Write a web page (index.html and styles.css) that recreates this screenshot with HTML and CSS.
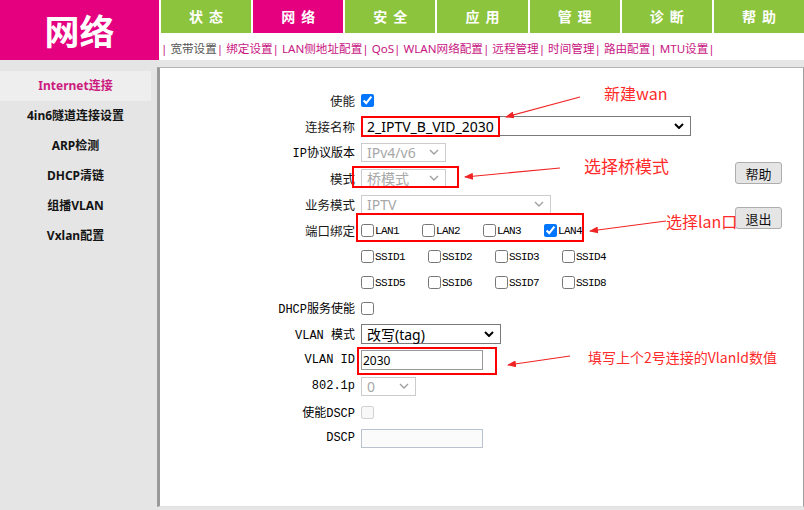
FILE: index.html
```html
<!DOCTYPE html>
<html lang="zh-CN">
<head>
    <meta charset="UTF-8">
    <meta name="viewport" content="width=device-width, initial-scale=1.0">
    <title>网络 - Internet连接</title>
    <link rel="stylesheet" href="styles.css">
</head>
<body>
    <div class="header">
        <div class="logo">网络</div>
        <div class="nav">
            <ul class="tabs">
                <li>状态</li>
                <li class="active">网络</li>
                <li>安全</li>
                <li>应用</li>
                <li>管理</li>
                <li>诊断</li>
                <li>帮助</li>
            </ul>
            <div class="subnav">
                <span class="sep">|</span> <span class="current">宽带设置</span><span class="sep">|</span>
                绑定设置| LAN侧地址配置| QoS| WLAN网络配置| 远程管理| 时间管理| 路由配置| MTU设置|
            </div>
        </div>
    </div>

    <div class="main">
        <ul class="sidebar">
            <li class="active">Internet连接</li>
            <li>4in6隧道连接设置</li>
            <li>ARP检测</li>
            <li>DHCP清链</li>
            <li>组播VLAN</li>
            <li>Vxlan配置</li>
        </ul>

        <div class="content">
            <form class="wan-form">
                <div class="row">
                    <label>使能</label>
                    <input type="checkbox" checked>
                </div>
                <div class="row">
                    <label>连接名称</label>
                    <div class="select select-name">
                        <span>2_IPTV_B_VID_2030</span>
                        <svg class="chev" width="10" height="6" viewBox="0 0 10 6"><path d="M1 1l4 4 4-4"/></svg>
                    </div>
                </div>
                <div class="row">
                    <label class="simsun">IP协议版本</label>
                    <div class="select select-short disabled">
                        <span>IPv4/v6</span>
                        <svg class="chev" width="10" height="6" viewBox="0 0 10 6"><path d="M1 1l4 4 4-4"/></svg>
                    </div>
                </div>
                <div class="row">
                    <label>模式</label>
                    <div class="select select-short disabled">
                        <span>桥模式</span>
                        <svg class="chev" width="10" height="6" viewBox="0 0 10 6"><path d="M1 1l4 4 4-4"/></svg>
                    </div>
                </div>
                <div class="row">
                    <label>业务模式</label>
                    <div class="select select-mid disabled">
                        <span>IPTV</span>
                        <svg class="chev" width="10" height="6" viewBox="0 0 10 6"><path d="M1 1l4 4 4-4"/></svg>
                    </div>
                </div>
                <div class="row">
                    <label>端口绑定</label>
                    <div class="ports lan">
                        <span><input type="checkbox">LAN1</span>
                        <span><input type="checkbox">LAN2</span>
                        <span><input type="checkbox">LAN3</span>
                        <span><input type="checkbox" checked>LAN4</span>
                    </div>
                </div>
                <div class="row">
                    <label></label>
                    <div class="ports ssid">
                        <span><input type="checkbox">SSID1</span>
                        <span><input type="checkbox">SSID2</span>
                        <span><input type="checkbox">SSID3</span>
                        <span><input type="checkbox">SSID4</span>
                    </div>
                </div>
                <div class="row">
                    <label></label>
                    <div class="ports ssid">
                        <span><input type="checkbox">SSID5</span>
                        <span><input type="checkbox">SSID6</span>
                        <span><input type="checkbox">SSID7</span>
                        <span><input type="checkbox">SSID8</span>
                    </div>
                </div>
                <div class="row">
                    <label class="simsun">DHCP服务使能</label>
                    <input type="checkbox">
                </div>
                <div class="row">
                    <label class="simsun">VLAN 模式</label>
                    <div class="select select-vlan">
                        <span>改写(tag)</span>
                        <svg class="chev" width="10" height="6" viewBox="0 0 10 6"><path d="M1 1l4 4 4-4"/></svg>
                    </div>
                </div>
                <div class="row">
                    <label class="simsun">VLAN ID</label>
                    <input type="text" class="text-input" value="2030">
                </div>
                <div class="row">
                    <label class="simsun">802.1p</label>
                    <div class="select select-tiny disabled">
                        <span>0</span>
                        <svg class="chev" width="10" height="6" viewBox="0 0 10 6"><path d="M1 1l4 4 4-4"/></svg>
                    </div>
                </div>
                <div class="row">
                    <label class="simsun">使能DSCP</label>
                    <input type="checkbox" disabled>
                </div>
                <div class="row">
                    <label class="simsun">DSCP</label>
                    <input type="text" class="text-input" disabled>
                </div>
            </form>

            <div class="actions">
                <button type="button">帮助</button>
                <button type="button">退出</button>
            </div>
        </div>
    </div>

    <!-- red annotations drawn over the screenshot -->
    <div class="notes">
        <svg width="804" height="510" viewBox="0 0 804 510">
            <defs>
                <marker id="head" markerWidth="9" markerHeight="7" refX="8" refY="3.5" orient="auto" markerUnits="userSpaceOnUse">
                    <path d="M0 0L9 3.5L0 7z" fill="#f02424"/>
                </marker>
            </defs>
            <g fill="none" stroke="#ff0000" stroke-width="2">
                <rect x="362" y="117" width="137" height="19"/>
                <rect x="353" y="167" width="105" height="20"/>
                <rect x="357" y="214" width="226" height="27"/>
                <rect x="358" y="348" width="138" height="26"/>
            </g>
            <g stroke="#f02424" stroke-width="1.2" marker-end="url(#head)">
                <line x1="580" y1="97" x2="506" y2="117"/>
                <line x1="560" y1="168" x2="465" y2="177"/>
                <line x1="666" y1="221" x2="590" y2="231"/>
                <line x1="570" y1="356" x2="508" y2="365"/>
            </g>
        </svg>
        <span class="note note-wan">新建wan</span>
        <span class="note note-bridge">选择桥模式</span>
        <span class="note note-lan">选择lan口</span>
        <span class="note note-vlan">填写上个2号连接的VlanId数值</span>
    </div>
</body>
</html>
```

FILE: styles.css
```css
body {
    margin: 0;
    width: 804px;
    height: 510px;
    overflow: hidden;
    position: relative;
    background: #e6e6e6;
    font-family: "Noto Sans", "Noto Sans CJK SC", sans-serif;
    color: #111;
}

/* header */
.header {
    display: flex;
    height: 60px;
    background: #fff;
}
.logo {
    width: 159px;
    background: #e4007e;
    color: #fff;
    font-family: "Noto Sans CJK SC", sans-serif;
    font-size: 35px;
    font-weight: bold;
    line-height: 60px;
    text-align: center;
}
.nav {
    flex: 1;
    display: flex;
    flex-direction: column;
    padding-left: 2px;
}
.tabs {
    display: flex;
    gap: 2px;
    height: 33px;
    margin: 0;
    padding: 0;
    list-style: none;
}
.tabs li {
    flex: 1;
    background: #8cc43e;
    color: #fff;
    font-family: "Noto Sans CJK SC", sans-serif;
    font-size: 14px;
    font-weight: bold;
    line-height: 33px;
    text-align: center;
    letter-spacing: 6px;
    text-indent: 6px;
}
.tabs li.active {
    background: #e4007e;
}
.subnav {
    padding: 6px 0 0 0;
    font-family: "Noto Sans", "Noto Sans CJK SC", sans-serif;
    font-size: 11.6px;
    line-height: 20px;
    color: #c8157f;
    white-space: nowrap;
}
.subnav .current {
    color: #555;
}

/* body area */
.main {
    display: flex;
    height: 450px;
}
.sidebar {
    width: 157px;
    margin: 0;
    padding: 11px 0 0;
    list-style: none;
    background: #e5e5e5;
}
.sidebar li {
    width: 151px;
    height: 30px;
    line-height: 30px;
    text-align: center;
    font-size: 12px;
    font-weight: bold;
    color: #141414;
}
.sidebar li.active {
    background: #eeeeee;
    color: #cc1a7f;
}
.content {
    flex: 1;
    display: flex;
    height: 440px;
    margin-top: 7px;
    box-sizing: border-box;
    background: #fff;
    border-top: 1px solid #b4b4b4;
    border-left: 3px solid #9a9a9a;
    border-right: 1px solid #9f9f9f;
    border-bottom: 1px solid #e2e2e2;
}

/* form */
.wan-form {
    flex: 1;
    padding-top: 19px;
}
.row {
    display: flex;
    align-items: center;
    height: 26px;
}
.row label {
    width: 195px;
    margin-right: 6px;
    text-align: right;
    font-family: "Noto Sans CJK SC", sans-serif;
    font-size: 12.5px;
    color: #1a1a1a;
}
.row label.simsun {
    font-family: "Liberation Mono", "Noto Sans CJK SC", monospace;
    font-size: 12px;
    color: #000;
}
input[type="checkbox"] {
    width: 13px;
    height: 13px;
    margin: 0;
}

.select {
    display: flex;
    align-items: center;
    justify-content: space-between;
    height: 20px;
    box-sizing: border-box;
    padding: 0 6px 0 5px;
    border: 1px solid #7a7a7a;
    background: #fff;
    font-size: 14px;
    color: #000;
}
.select .chev {
    fill: none;
    stroke: #000;
    stroke-width: 2;
}
.select.disabled {
    height: 19px;
    border-color: #cccccc;
    color: #a8a8a8;
}
.select.disabled .chev {
    stroke: #a0a0a0;
    stroke-width: 1.4;
}
.select-name { width: 330px; }
.select-short { width: 85px; }
.select-mid { width: 190px; }
.select-vlan { width: 140px; }
.select-tiny { width: 55px; }

.ports {
    display: flex;
    font-family: "Liberation Mono", monospace;
    font-size: 11px;
    letter-spacing: -0.6px;
    color: #000;
}
.ports span {
    display: flex;
    align-items: flex-end;
    line-height: 11px;
}
.ports input {
    margin-right: 1px;
}
.lan span { width: 61px; }
.ssid span { width: 67px; }

.text-input {
    width: 122px;
    height: 20px;
    box-sizing: border-box;
    margin: 0;
    padding: 0 1px;
    border: 1px solid #9a9a9a;
    font-family: "Noto Sans", sans-serif;
    font-size: 12px;
    color: #000;
}
.text-input:disabled {
    height: 19px;
    border-color: #b9c3cf;
    background: #fbfbfb;
}

.actions {
    display: flex;
    flex-direction: column;
    gap: 23px;
    padding: 94px 21px 0 0;
}
.actions button {
    width: 47px;
    height: 22px;
    padding: 0;
    border: 1px solid #adadad;
    border-radius: 3px;
    background: #e5e5e5;
    font-family: "Noto Sans CJK SC", sans-serif;
    font-size: 13px;
    color: #111;
}

/* annotations */
.notes {
    position: absolute;
    left: 0;
    top: 0;
    width: 804px;
    height: 510px;
    pointer-events: none;
}
.notes svg {
    position: absolute;
    left: 0;
    top: 0;
}
.note {
    position: absolute;
    font-family: "Noto Sans CJK SC", sans-serif;
    font-size: 16px;
    line-height: 16px;
    color: #ff2a2a;
    white-space: nowrap;
}
.note-wan { left: 604px; top: 85px; }
.note-bridge { left: 584px; top: 157px; font-size: 17px; line-height: 17px; }
.note-lan { left: 666px; top: 213px; }
.note-vlan { left: 588px; top: 350px; font-size: 14px; line-height: 14px; }
```
